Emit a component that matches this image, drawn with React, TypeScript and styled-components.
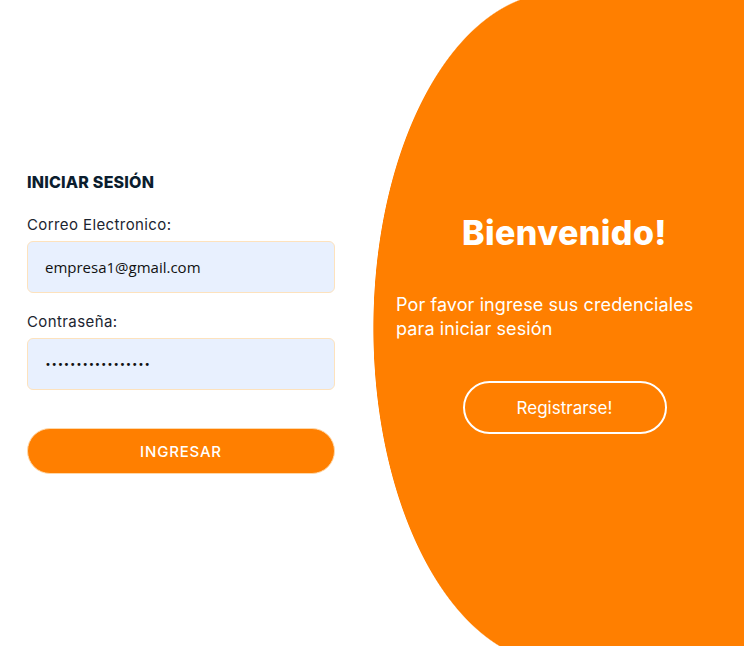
import React from 'react'
import styled, {createGlobalStyle} from 'styled-components'

const orange = '#ff7f00'

function App() {
  return (
    <>
      <GlobalStyle />
      <Page>
        <LoginSide>
          <Form onSubmit={e => e.preventDefault()}>
            <Title>INICIAR SESIÓN</Title>
            <Label htmlFor="email">Correo Electronico:</Label>
            <Input id="email" type="email" defaultValue="empresa1@gmail.com" />
            <Label htmlFor="password">Contraseña:</Label>
            <Input id="password" type="password" defaultValue="empresa1234567890" />
            <SubmitButton type="submit">INGRESAR</SubmitButton>
          </Form>
        </LoginSide>
        <WelcomeSide>
          <Welcome>
            <WelcomeTitle>Bienvenido!</WelcomeTitle>
            <WelcomeText>
              Por favor ingrese sus credenciales
              <br />
              para iniciar sesión
            </WelcomeText>
            <OutlineButton type="button">Registrarse!</OutlineButton>
          </Welcome>
        </WelcomeSide>
      </Page>
    </>
  )
}

const GlobalStyle = createGlobalStyle`
  * {
    box-sizing: border-box;
  }
  body {
    margin: 0;
    background: white;
    font-family: Inter, 'Open Sans', sans-serif;
  }
`

const Page = styled.main`
  display: flex;
  width: 100%;
  height: 100vh;
  overflow: hidden;
`

const LoginSide = styled.section`
  flex: 0 0 373px;
  display: flex;
  align-items: center;
  padding-left: 27px;
`

const Form = styled.form`
  display: flex;
  flex-direction: column;
  width: 308px;
`

const Title = styled.h1`
  margin: 0 0 23px;
  font-size: 16px;
  font-weight: 800;
  color: #0b1d2e;
  letter-spacing: 0.2px;
`

const Label = styled.label`
  font-size: 15px;
  letter-spacing: 0.4px;
  color: #1b2430;
  margin-bottom: 7px;
`

const Input = styled.input`
  height: 52px;
  margin-bottom: 19px;
  padding: 0 17px;
  border: 1px solid #fde2bd;
  border-radius: 6px;
  background: #e8f0fe;
  font-family: 'Open Sans', sans-serif;
  font-size: 15px;
  color: #111;
  outline: none;

  &[type='password'] {
    font-family: 'DejaVu Sans', sans-serif;
    font-size: 10px;
    letter-spacing: 0.3px;
  }
`

const SubmitButton = styled.button`
  margin-top: 19px;
  height: 46px;
  border: 1px solid #ffd8a8;
  border-radius: 23px;
  background: ${orange};
  color: white;
  font-family: inherit;
  font-size: 15px;
  font-weight: 500;
  letter-spacing: 0.8px;
  cursor: pointer;
`

const WelcomeSide = styled.section`
  flex: 1;
  display: flex;
  align-items: center;
  padding: 0 11px 0 23px;
  background:
    radial-gradient(185px 336px at 185px 328px, ${orange} 99.6%, transparent 100%),
    linear-gradient(to right, transparent 185px, ${orange} 185px);
`

const Welcome = styled.div`
  display: flex;
  flex-direction: column;
  align-items: center;
  width: 100%;
  color: white;
`

const WelcomeTitle = styled.h2`
  margin: 0 0 40px;
  font-size: 34px;
  font-weight: 800;
  letter-spacing: 0.4px;
`

const WelcomeText = styled.p`
  align-self: stretch;
  margin: 0 0 40px;
  font-size: 18px;
  line-height: 24px;
  letter-spacing: 0.1px;
`

const OutlineButton = styled.button`
  width: 204px;
  height: 53px;
  border: 2px solid white;
  border-radius: 27px;
  background: transparent;
  color: white;
  font-family: inherit;
  font-size: 17px;
  cursor: pointer;
`

export default App
